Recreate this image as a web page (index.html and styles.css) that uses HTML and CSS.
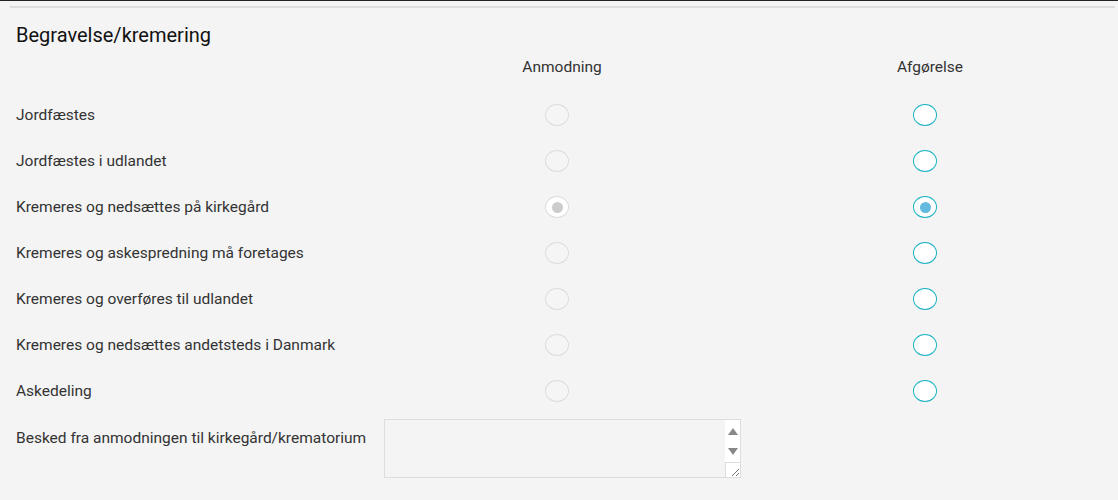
FILE: index.html
```html
<!DOCTYPE html>
<html lang="da">
<head>
  <meta charset="UTF-8" />
  <title>Begravelse/kremering</title>
  <link rel="stylesheet" href="styles.css">
</head>
<body>
  <div class="topbar"></div>
  <div class="section">
    <h2>Begravelse/kremering</h2>
    <div class="grid">
      <div></div>
      <div class="col-head">Anmodning</div>
      <div class="col-head">Afgørelse</div>

      <div class="label">Jordfæstes</div>
      <div class="cell"><span class="radio req"></span></div>
      <div class="cell"><span class="radio dec"></span></div>

      <div class="label">Jordfæstes i udlandet</div>
      <div class="cell"><span class="radio req"></span></div>
      <div class="cell"><span class="radio dec"></span></div>

      <div class="label">Kremeres og nedsættes på kirkegård</div>
      <div class="cell"><span class="radio req checked"></span></div>
      <div class="cell"><span class="radio dec checked"></span></div>

      <div class="label">Kremeres og askespredning må foretages</div>
      <div class="cell"><span class="radio req"></span></div>
      <div class="cell"><span class="radio dec"></span></div>

      <div class="label">Kremeres og overføres til udlandet</div>
      <div class="cell"><span class="radio req"></span></div>
      <div class="cell"><span class="radio dec"></span></div>

      <div class="label">Kremeres og nedsættes andetsteds i Danmark</div>
      <div class="cell"><span class="radio req"></span></div>
      <div class="cell"><span class="radio dec"></span></div>

      <div class="label">Askedeling</div>
      <div class="cell"><span class="radio req"></span></div>
      <div class="cell"><span class="radio dec"></span></div>
    </div>
    <div class="message">
      <div class="msg-label">Besked fra anmodningen til kirkegård/krematorium</div>
      <div class="msg-box">
        <div class="msg-text"></div>
        <div class="scrollbar">
          <span class="arrow up"></span>
          <span class="arrow down"></span>
          <span class="resizer">
            <svg width="10" height="10" viewBox="0 0 10 10"><path d="M9 2 L2 9 M9 6 L6 9" stroke="#777" stroke-width="1" fill="none"/></svg>
          </span>
        </div>
      </div>
    </div>
  </div>
</body>
</html>
```
FILE: styles.css
```css
body {
  margin: 0;
  background: #f4f4f4;
  color: #333;
  font-family: Roboto, 'Noto Sans', sans-serif;
}
.topbar {
  height: 1px;
  background: #222;
}
.section {
  margin: 5px 3px 0 10px;
  border-top: 2px solid #ddd;
  padding: 0 0 0 6px;
}
h2 {
  margin: 0;
  padding-top: 14px;
  font-size: 20px;
  font-weight: normal;
  color: #111;
  line-height: 26px;
}
.grid {
  display: grid;
  grid-template-columns: 358px 366px 370px;
  grid-template-rows: 34px;
  grid-auto-rows: 46px;
  align-items: center;
  font-size: 15.5px;
  margin-top: 10px;
}
.col-head {
  align-self: start;
  line-height: 18px;
  text-align: center;
  padding-left: 10px;
}
.cell {
  display: flex;
  justify-content: center;
}
.radio {
  width: 22px;
  height: 20px;
  border-radius: 50%;
  display: flex;
  align-items: center;
  justify-content: center;
}
.radio.req {
  border: 1px solid #ddd;
  background: #f5f5f5;
}
.radio.dec {
  border: 1px solid #1ab2c2;
  background: #fff;
}
.radio.checked::after {
  content: "";
  width: 11px;
  height: 11px;
  border-radius: 50%;
}
.radio.req.checked {
  background: #fff;
}
.radio.req.checked::after {
  background: #ccc;
}
.radio.dec.checked::after {
  background: #62badd;
}
.message {
  display: flex;
  margin-top: 5px;
  font-size: 15.5px;
}
.msg-label {
  width: 368px;
  padding-top: 10px;
}
.msg-box {
  display: flex;
  width: 357px;
  height: 59px;
  box-sizing: border-box;
  border: 1px solid #ddd;
  background: #f4f4f4;
}
.msg-text {
  flex: 1;
}
.scrollbar {
  width: 15px;
  background: #fff;
  display: flex;
  flex-direction: column;
  align-items: center;
}
.arrow {
  width: 0;
  height: 0;
  border-left: 5px solid transparent;
  border-right: 5px solid transparent;
}
.arrow.up {
  margin-top: 8px;
  border-bottom: 7px solid #888;
}
.arrow.down {
  margin-top: 13px;
  border-top: 7px solid #888;
}
.resizer {
  margin-top: auto;
  width: 15px;
  height: 15px;
  box-sizing: border-box;
  border-left: 1px solid #ddd;
  border-top: 1px solid #ddd;
  display: flex;
  align-items: flex-end;
  justify-content: flex-end;
}
.resizer svg {
  display: block;
}
```
